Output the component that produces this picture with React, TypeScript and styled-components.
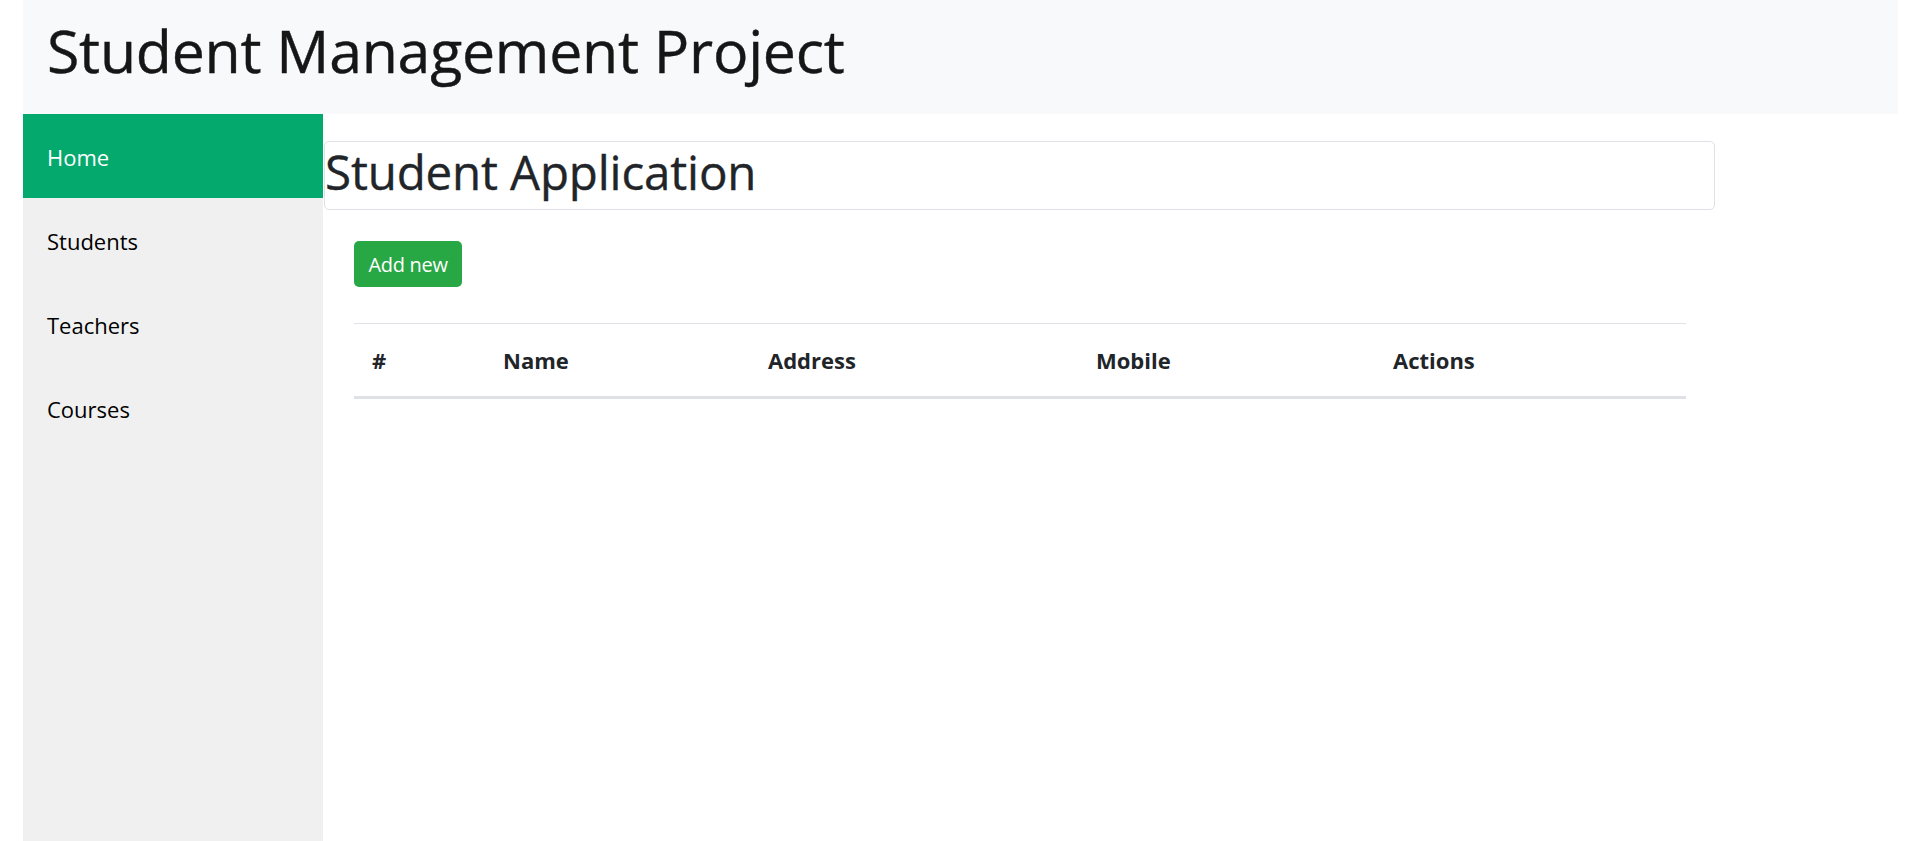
import React from "react";
import styled, { createGlobalStyle } from "styled-components";

const GlobalStyle = createGlobalStyle`
  html, body {
    margin: 0;
    padding: 0;
    background: #ffffff;
  }
  body {
    font-family: "Open Sans", "Noto Sans", sans-serif;
    color: #212529;
  }
  * { box-sizing: border-box; }
`;

const Page = styled.div`
  min-height: 100vh;
  display: flex;
  flex-direction: column;
  padding: 0 22px 0 23px;
`;

const TopBar = styled.header`
  height: 114px;
  background: #f8f9fa;
  padding: 15px 0 0 24px;
  flex-shrink: 0;
`;

const Brand = styled.h1`
  margin: 0;
  font-size: 59px;
  font-weight: 400;
  line-height: 1.2;
  color: #161616;
  letter-spacing: -0.25px;
  -webkit-text-stroke: 0.4px #161616;
`;

const Body = styled.div`
  flex: 1;
  display: flex;
`;

const Sidebar = styled.nav`
  width: 300px;
  flex-shrink: 0;
  background: #f0f0f0;
  display: flex;
  flex-direction: column;
`;

const NavItem = styled.a<{ $active?: boolean }>`
  display: flex;
  align-items: center;
  height: 84px;
  padding: 1px 0 0 24px;
  font-size: 22px;
  text-decoration: none;
  color: ${(p) => (p.$active ? "#ffffff" : "#000000")};
  background: ${(p) => (p.$active ? "#04aa6d" : "transparent")};
  cursor: pointer;
`;

const Main = styled.main`
  flex: 1;
  padding: 27px 0 0 1px;
`;

const TitleCard = styled.div`
  width: 1391px;
  border: 1px solid #dee2e6;
  border-radius: 5px;
  padding-bottom: 7px;
`;

const PageTitle = styled.h1`
  margin: 0;
  font-size: 47.5px;
  font-weight: 400;
  line-height: 60px;
  color: #212529;
  letter-spacing: -0.15px;
  -webkit-text-stroke: 0.35px #212529;
`;

const Content = styled.section`
  width: 1391px;
  padding: 31px 29px 0 30px;
  display: flex;
  flex-direction: column;
  align-items: flex-start;
`;

const AddButton = styled.button`
  height: 46px;
  width: 108px;
  border: none;
  border-radius: 5px;
  background: #28a745;
  color: #ffffff;
  font-family: inherit;
  font-size: 20px;
  letter-spacing: -0.3px;
  padding: 0;
  cursor: pointer;
`;

const Table = styled.table`
  margin-top: 36px;
  width: 100%;
  border-collapse: collapse;
  table-layout: fixed;
`;

const HeadRow = styled.tr`
  border-top: 1px solid #dee2e6;
  border-bottom: 3px solid #dee2e6;
`;

const Th = styled.th<{ $w?: number }>`
  width: ${(p) => (p.$w ? `${p.$w}px` : "auto")};
  height: 74px;
  padding: 0 0 0 18px;
  text-align: left;
  vertical-align: middle;
  font-size: 22px;
  font-weight: 700;
  color: #212529;
`;

const columns: { label: string; w?: number }[] = [
  { label: "#", w: 131 },
  { label: "Name", w: 265 },
  { label: "Address", w: 328 },
  { label: "Mobile", w: 297 },
  { label: "Actions" },
];

const navItems = ["Home", "Students", "Teachers", "Courses"];

export default function App() {
  return (
    <>
      <GlobalStyle />
      <Page>
        <TopBar>
          <Brand>Student Management Project</Brand>
        </TopBar>
        <Body>
          <Sidebar>
            {navItems.map((item, i) => (
              <NavItem key={item} $active={i === 0}>
                {item}
              </NavItem>
            ))}
          </Sidebar>
          <Main>
            <TitleCard>
              <PageTitle>Student Application</PageTitle>
            </TitleCard>
            <Content>
              <AddButton>Add new</AddButton>
              <Table>
                <thead>
                  <HeadRow>
                    {columns.map((c) => (
                      <Th key={c.label} $w={c.w}>
                        {c.label}
                      </Th>
                    ))}
                  </HeadRow>
                </thead>
                <tbody />
              </Table>
            </Content>
          </Main>
        </Body>
      </Page>
    </>
  );
}
